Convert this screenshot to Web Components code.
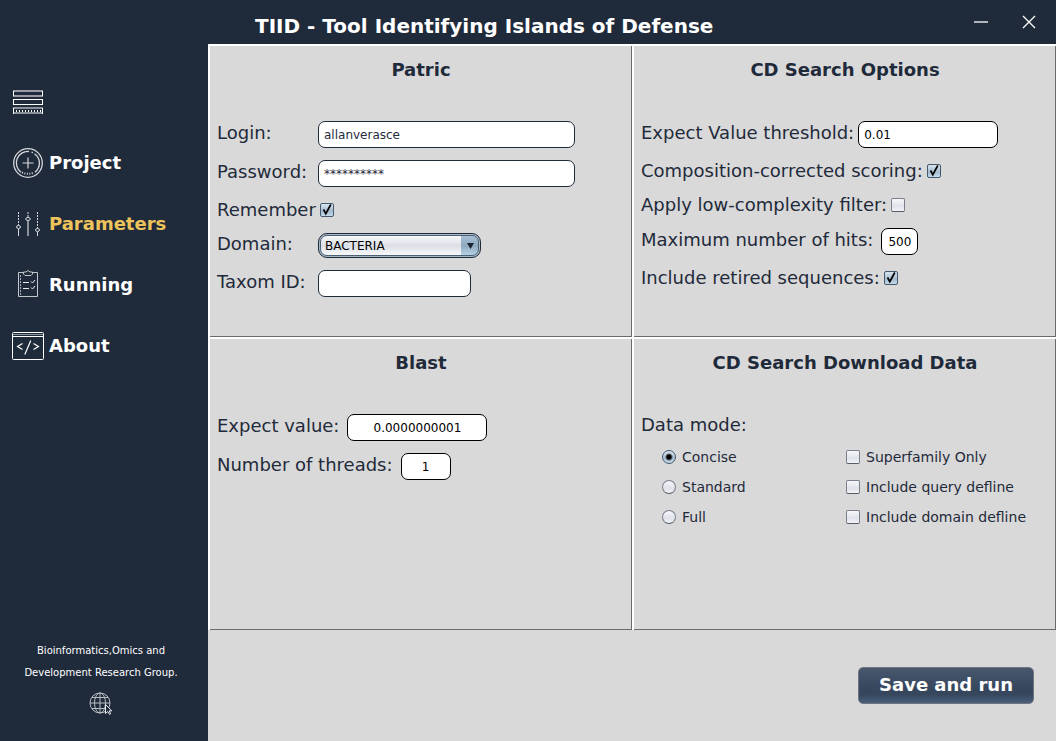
<!DOCTYPE html>
<html lang="en">
<head>
<meta charset="utf-8">
<meta name="viewport" content="width=device-width, initial-scale=1">
<title>TIID - Tool Identifying Islands of Defense</title>
<style>
  html, body { margin: 0; }
  body {
    --navy: #1f2a3a;
    --surface: #d9d9d9;
    --gold: #edc45b;
    font-family: "DejaVu Sans", sans-serif;
    font-size: 18px;
    color: var(--navy);
    background: var(--surface);
  }
</style>
</head>
<body>
<tiid-app></tiid-app>
<script>
class TiidElement extends HTMLElement {
  constructor() {
    super();
    this.attachShadow({ mode: 'open' });
  }
  connectedCallback() {
    this.shadowRoot.innerHTML = '<style>*{box-sizing:border-box}</style>' + this.render();
  }
  attr(name, fallback = '') {
    return this.getAttribute(name) ?? fallback;
  }
}

const ICONS = {
  menu: `<g shape-rendering="crispEdges" fill="none">
      <path stroke="#9a9ca5" stroke-width="2" d="M1 5h30M1 10h30"/><path stroke="#fff" d="M1.5 5v5M30.500 5v5"/>
      <rect x="1.500" y="13.500" width="29" height="5" stroke="#fff"/>
      <path stroke="#8b929b" stroke-width="2" d="M1 22h30M1 27h30"/><path stroke="#fff" d="M1.500 22v6M30.500 22v6"/>
      <path stroke="#fff" stroke-width="2" stroke-dasharray="1 2" d="M4 24.500h25"/></g>`,
  project: `<g fill="none" stroke="#d5d8db">
      <circle cx="16" cy="16" r="14.300" stroke-width="1.300"/>
      <path d="M9 25.200A11.500 11.500 0 0 1 17 4.500M19.500 5.200L21 5.700M22.500 6.700A11.500 11.500 0 0 1 23 25.200" stroke-width="1.300"/>
      <path d="M10 25.400Q16 28.300 22 25.400" stroke-width="2" stroke-dasharray="1 1.500"/>
      <path d="M10.500 16h11M16 10.500v11" stroke-width="1.200"/></g>`,
  parameters: `<g fill="none" stroke="#d5d8db">
      <path stroke-dasharray="2 1" d="M6.500 4v13M25.500 4v16M16 4v5"/>
      <ellipse cx="6.500" cy="19" rx="2" ry="1.500"/><ellipse cx="16" cy="11" rx="2.300" ry="1.500"/><ellipse cx="25.500" cy="22" rx="2" ry="1.500"/>
      <path d="M6.500 21v7M25.500 24v4"/><path stroke="#8b929b" stroke-width="2" d="M16 13v15"/></g>`,
  running: `<g fill="none" stroke="#c3c7cb">
      <path d="M11.500 3.500h-5v24h19v-24h-5"/>
      <path d="M11.500 3v2l1.500 1.500h6l1.500-1.500V3h-2.500q-2-3-4 0z"/>
      <path stroke-dasharray="2 1" stroke="#a4abb2" d="M8.500 6v20"/>
      <path stroke="#e8eaec" d="M11 13.500h6M11 19.500h6M19 12.500l1.500 1.500 2.500-3M19 18.500l1.500 1.500 2.500-3"/></g>`,
  about: `<g fill="none" stroke="#fff">
      <rect x=".500" y="2.500" width="31" height="27" rx="1"/><path d="M1 6.500h30"/><path stroke="#8b929b" d="M1 4.500h30"/>
      <path stroke-width="1.200" d="M10.500 13.500l-5 3 5 3M21.500 13.500l5 3-5 3M18.800 10.500l-6 14"/></g>`
};

customElements.define('tiid-nav-item', class extends TiidElement {
  render() {
    return `<style>
      :host { display: block; }
      a { display: flex; align-items: center; gap: 5px; height: 32px; color: #fff; font-weight: bold; font-size: 18px; text-decoration: none; }
      :host([active]) a { color: var(--gold); }
      svg { flex: none; }
      .name { padding-bottom: 2px; }
    </style>
    <a href="#${this.attr('icon')}"><svg width="32" height="32" viewBox="0 0 32 32" aria-hidden="true">${ICONS[this.attr('icon')]}</svg><span class="name"><slot></slot></span></a>`;
  }
});

customElements.define('tiid-sidebar', class extends TiidElement {
  render() {
    return `<style>
      :host { display: flex; flex-direction: column; background: var(--navy); color: #fff; }
      nav { display: flex; flex-direction: column; gap: 29px; padding: 42px 12px 0; }
      button { width: 32px; height: 32px; padding: 0; border: 0; background: none; }
      button svg { display: block; }
      footer { margin-top: auto; padding: 0 6px 25px 0; font-size: 10px; line-height: 22px; text-align: center; }
      footer p { margin: 0; }
      footer a { display: block; width: 24px; height: 24px; margin: 8px auto 0; }
      footer svg { display: block; }
    </style>
    <nav aria-label="Sections">
      <button aria-label="Menu"><svg width="32" height="32" viewBox="0 0 32 32">${ICONS.menu}</svg></button>
      <tiid-nav-item icon="project">Project</tiid-nav-item>
      <tiid-nav-item icon="parameters" active>Parameters</tiid-nav-item>
      <tiid-nav-item icon="running">Running</tiid-nav-item>
      <tiid-nav-item icon="about">About</tiid-nav-item>
    </nav>
    <footer>
      <p>Bioinformatics,Omics and<br>Development Research Group.</p>
      <a href="#site" aria-label="Website"><svg width="24" height="24" viewBox="0 0 24 24" fill="none" stroke="#b9bec4">
        <circle cx="11" cy="11" r="10"/><ellipse cx="11" cy="11" rx="5.500" ry="10"/>
        <path d="M11 1v20M1 11h20M3 5.500h16M3 16.500h14"/>
        <path fill="#1f2a3a" stroke="#e8eaec" d="M16.500 12.500v9l2.300-2 1.700 3 1.200-.800-1.500-2.800h2.600z"/></svg></a>
    </footer>`;
  }
});

customElements.define('tiid-titlebar', class extends TiidElement {
  render() {
    return `<style>
      :host { display: flex; align-items: center; height: 44px; background: var(--navy); color: #fff; padding: 0 16px 0 255px; }
      h1 { margin: 0; padding-top: 8px; flex: 1; font-size: 20px; line-height: 22px; white-space: nowrap; }
      .controls { display: flex; gap: 26px; }
      button { width: 22px; height: 22px; padding: 0; border: 0; background: none; }
      svg { display: block; }
    </style>
    <h1><slot></slot></h1>
    <div class="controls">
      <button aria-label="Minimize"><svg width="22" height="22" viewBox="0 0 22 22"><path d="M4 11h14" stroke="#b2b5bb" stroke-width="2"/></svg></button>
      <button aria-label="Close"><svg width="22" height="22" viewBox="0 0 22 22"><path d="M5 5l12 12M17 5L5 17" stroke="#fff" stroke-width="1.300"/></svg></button>
    </div>`;
  }
});

customElements.define('tiid-panel', class extends TiidElement {
  render() {
    return `<style>
      :host { display: block; padding: 13px 7px; border: solid #fff; border-width: 2px 0 0 2px; box-shadow: inset -1px -1px #6b6b6b; }
      h2 { margin: 0 0 40px; font-size: 18px; line-height: 22px; text-align: center; }
      .rows { display: flex; flex-direction: column; gap: 12px; }
    </style>
    <h2>${this.attr('heading')}</h2>
    <div class="rows"><slot></slot></div>`;
  }
});

customElements.define('tiid-field', class extends TiidElement {
  render() {
    return `<style>
      :host { display: flex; align-items: center; gap: 8px; }
      label { padding-bottom: 3px; line-height: 20px; white-space: nowrap; }
      :host([aligned]) { gap: 0; }
      :host([aligned]) label { width: 101px; }
      :host([close]) { gap: 4px; }
      input { width: var(--field, 140px); height: 27px; padding: 0 5px; border: 1px solid #000; border-radius: 7px; background: #fff; font: 12px "DejaVu Sans", sans-serif; color: #000; outline: none; }
      :host([aligned]) input { border-color: var(--navy); color: var(--navy); }
      :host([centered]) input { padding: 0 4px; text-align: center; }
    </style>
    <label for="f">${this.attr('label')}</label><input id="f" type="text" autocomplete="off" value="${this.attr('value')}">`;
  }
});

customElements.define('tiid-select', class extends TiidElement {
  render() {
    return `<style>
      :host { display: flex; align-items: center; }
      label { width: 101px; padding-bottom: 3px; line-height: 20px; }
      .box { display: grid; width: 163px; height: 25px; border: 1px solid var(--navy); border-radius: 9px; padding: 1px; background: #a9b9c8; }
      select { grid-area: 1/1; appearance: none; min-width: 0; border: 1px solid #4c6176; border-radius: 7px; padding: 0 5px 0 4px; font: 12px "DejaVu Sans", sans-serif; color: #000; outline: none;
        background: linear-gradient(#a8c0d4, #8fa9c1 50%, #b5cfe4) right / 17px 100% no-repeat, linear-gradient(#f8f9fb, #dcdfe6 50%, #f6f8fb); }
      svg { grid-area: 1/1; justify-self: end; align-self: center; margin-right: 5px; pointer-events: none; }
    </style>
    <label for="s">${this.attr('label')}</label>
    <span class="box"><select id="s"><option>BACTERIA</option></select><svg width="7" height="6" viewBox="0 0 7 6"><path d="M0 0h7L3.500 6z" fill="#1a2430"/></svg></span>`;
  }
});

customElements.define('tiid-check', class extends TiidElement {
  render() {
    return `<style>
      :host { display: block; }
      label { display: flex; align-items: center; gap: 4px; height: 22px; line-height: 20px; white-space: nowrap; }
      :host([leading]) label { flex-direction: row-reverse; justify-content: flex-end; gap: 6px; font-size: 14px; }
      .box { display: grid; width: 14px; height: 14px; }
      input { grid-area: 1/1; appearance: none; width: 14px; height: 14px; margin: 0; border: 1px solid #7b7f8b; border-bottom-color: #555b68; border-radius: 2px; background: linear-gradient(#f6f7fa, #dfe2e9 60%, #f2f4f8); }
      input:checked { border-color: #45596e; background: linear-gradient(#d9e5ef, #a4bbd0 60%, #c6dcec); }
      svg { grid-area: 1/1; visibility: hidden; pointer-events: none; }
      input:checked + svg { visibility: visible; }
    </style>
    <label><span class="text">${this.attr('label')}</span><span class="box"><input type="checkbox" ${this.hasAttribute('checked') ? 'checked' : ''}><svg width="14" height="14" viewBox="0 0 14 14"><path d="M3.500 6.500l2.300 4.200L10.800 1.500" fill="none" stroke="#000" stroke-width="1.700"/></svg></span></label>`;
  }
});

customElements.define('tiid-radios', class extends TiidElement {
  render() {
    const rows = this.attr('options').split('|').map((name, i) =>
      `<label><input type="radio" name="mode" ${i ? '' : 'checked'}><span>${name}</span></label>`).join('');
    return `<style>
      :host { display: flex; flex-direction: column; gap: 8px; font-size: 14px; }
      label { display: flex; align-items: center; gap: 6px; height: 22px; line-height: 20px; }
      input { appearance: none; width: 14px; height: 14px; margin: 0; border: 1px solid #7b7f8b; border-bottom-color: #555b68; border-radius: 50%; background: linear-gradient(#f6f7fa, #dfe2e9 60%, #f2f4f8); }
      input:checked { border-color: #45596e; background: radial-gradient(circle, #000 2px, transparent 4px), linear-gradient(#d9e5ef, #a4bbd0 60%, #c6dcec); }
    </style>${rows}`;
  }
});

customElements.define('tiid-data-mode', class extends TiidElement {
  render() {
    return `<style>
      :host { display: block; }
      .title { height: 22px; line-height: 22px; margin-bottom: 10px; }
      .cols { display: grid; grid-template-columns: 184px 1fr; padding-left: 21px; }
      .checks { display: flex; flex-direction: column; gap: 8px; }
    </style>
    <div class="title">Data mode:</div>
    <div class="cols">
      <tiid-radios options="Concise|Standard|Full"></tiid-radios>
      <div class="checks">
        <tiid-check leading label="Superfamily Only"></tiid-check>
        <tiid-check leading label="Include query defline"></tiid-check>
        <tiid-check leading label="Include domain defline"></tiid-check>
      </div>
    </div>`;
  }
});

customElements.define('tiid-button', class extends TiidElement {
  render() {
    return `<style>
      :host { display: block; }
      button { width: 176px; height: 37px; padding: 0 0 2px; border: 1px solid #6f7680; border-radius: 5px; color: #fff; font: bold 18px "DejaVu Sans", sans-serif;
        background: linear-gradient(#47586f, #36465c 60%, #36465c 75%, #4a5f7c); }
    </style><button type="button"><slot></slot></button>`;
  }
});

customElements.define('tiid-app', class extends TiidElement {
  render() {
    return `<style>
      :host { display: grid; min-height: 100vh; grid-template: "bar bar" 44px "side main" 1fr / 208px minmax(0, 1fr); }
      tiid-titlebar { grid-area: bar; }
      tiid-sidebar { grid-area: side; }
      main { grid-area: main; display: flex; flex-direction: column; }
      .panels { flex: 1; display: grid; grid-template-columns: 1fr 1fr; grid-auto-rows: 1fr; }
      .actions { display: flex; justify-content: flex-end; padding: 37px 22px; }
      .wide { --field: 257px; }
      .mid { --field: 153px; }
      .threads { --field: 50px; }
      .hits { --field: 37px; }
    </style>
    <tiid-titlebar>TIID - Tool Identifying Islands of Defense</tiid-titlebar>
    <tiid-sidebar></tiid-sidebar>
    <main>
      <div class="panels">
        <tiid-panel heading="Patric">
          <tiid-field aligned class="wide" label="Login:" value="allanverasce"></tiid-field>
          <tiid-field aligned class="wide" label="Password:" value="**********"></tiid-field>
          <tiid-check label="Remember" checked></tiid-check>
          <tiid-select label="Domain:"></tiid-select>
          <tiid-field aligned class="mid" label="Taxom ID:"></tiid-field>
        </tiid-panel>
        <tiid-panel heading="CD Search Options">
          <tiid-field close label="Expect Value threshold:" value="0.01"></tiid-field>
          <tiid-check label="Composition-corrected scoring:" checked></tiid-check>
          <tiid-check label="Apply low-complexity filter:"></tiid-check>
          <tiid-field centered class="hits" label="Maximum number of hits:" value="500"></tiid-field>
          <tiid-check label="Include retired sequences:" checked></tiid-check>
        </tiid-panel>
        <tiid-panel heading="Blast">
          <tiid-field centered label="Expect value:" value="0.0000000001"></tiid-field>
          <tiid-field centered class="threads" label="Number of threads:" value="1"></tiid-field>
        </tiid-panel>
        <tiid-panel heading="CD Search Download Data">
          <tiid-data-mode></tiid-data-mode>
        </tiid-panel>
      </div>
      <div class="actions"><tiid-button>Save and run</tiid-button></div>
    </main>`;
  }
});
</script>
</body>
</html>
